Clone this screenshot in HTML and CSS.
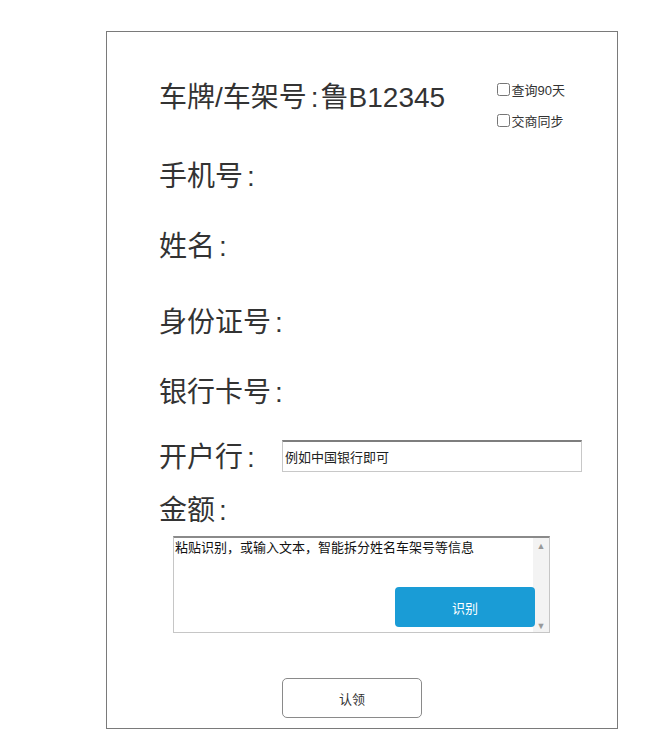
FILE: index.html
```html
<!DOCTYPE html>
<html lang="zh-CN">
<head>
<meta charset="utf-8">
<title>认领</title>
<link rel="stylesheet" href="styles.css">
</head>
<body>
<div class="panel">
  <div class="row row-plate">
    <div class="label">车牌/车架号<span class="colon">:</span>鲁B12345</div>
    <div class="checks">
      <label class="check"><input type="checkbox"><span>查询90天</span></label>
      <label class="check"><input type="checkbox"><span>交商同步</span></label>
    </div>
  </div>
  <div class="row row-phone"><div class="label">手机号<span class="colon">:</span></div></div>
  <div class="row row-name"><div class="label">姓名<span class="colon">:</span></div></div>
  <div class="row row-id"><div class="label">身份证号<span class="colon">:</span></div></div>
  <div class="row row-card"><div class="label">银行卡号<span class="colon">:</span></div></div>
  <div class="row row-bank">
    <div class="label label-bank">开户行<span class="colon">:</span></div>
    <input class="bank-input" type="text" value="例如中国银行即可">
  </div>
  <div class="row row-amount"><div class="label">金额<span class="colon">:</span></div></div>
  <div class="paste">
    <textarea class="paste-text">粘贴识别，或输入文本，智能拆分姓名车架号等信息</textarea>
    <div class="scrollbar"><span class="arrow">&#9650;</span><span class="arrow">&#9660;</span></div>
    <button class="btn-parse" type="button">识别</button>
  </div>
  <button class="btn-claim" type="button">认领</button>
</div>
</body>
</html>
```

FILE: styles.css
```css
* { box-sizing: border-box; }
html, body { margin: 0; padding: 0; background: #fff; }
body {
  font-family: "Liberation Sans", "Noto Sans CJK SC", sans-serif;
  color: #333;
}
.panel {
  margin: 31px 0 0 106px;
  width: 512px;
  height: 698px;
  border: 1px solid #7a7a7a;
  padding: 46px 52px 0 52px;
  display: flex;
  flex-direction: column;
}
.row {
  display: flex;
  align-items: center;
  height: 40px;
}
.label {
  font-size: 28px;
  line-height: 40px;
  color: #333;
  white-space: nowrap;
  flex-shrink: 0;
}
.colon { margin: 0 2px 0 4px; }
.row-plate { justify-content: space-between; align-items: flex-start; }
.row-phone { margin-top: 39px; }
.row-name { margin-top: 30px; }
.row-id { margin-top: 36px; }
.row-card { margin-top: 30px; }
.row-bank { margin-top: 25px; }
.row-amount { margin-top: 13px; }

.checks {
  display: flex;
  flex-direction: column;
  gap: 11px;
  padding-top: 1px;
}
.check {
  display: flex;
  align-items: center;
  height: 20px;
  font-size: 13px;
  color: #333;
}
.check input {
  margin: 0 2px 0 0;
  width: 13px;
  height: 13px;
}

.label-bank { width: 123px; }
.bank-input {
  flex-shrink: 0;
  width: 300px;
  height: 32px;
  margin-top: -4px;
  border: 1px solid #c8c8c8;
  border-top: 2px solid #7e7e7e;
  padding: 0 2px;
  font-family: "Noto Sans CJK SC", sans-serif;
  font-size: 13px;
  color: #222;
  background: #fff;
  outline: none;
}

.paste {
  position: relative;
  margin: 5px 0 0 14px;
  width: 377px;
  height: 97px;
  border: 1px solid #c6c6c6;
  border-top: 2px solid #8a8a8a;
  display: flex;
}
.paste-text {
  flex: 1;
  height: 100%;
  border: none;
  resize: none;
  outline: none;
  padding: 0 1px;
  margin: 0;
  font-family: "Noto Sans CJK SC", sans-serif;
  font-size: 13px;
  line-height: 17px;
  color: #111;
  overflow: hidden;
  background: #fff;
}
.scrollbar {
  width: 16px;
  background: #f3f3f3;
  display: flex;
  flex-direction: column;
  justify-content: space-between;
  align-items: center;
  padding: 3px 0 1px;
}
.arrow {
  font-size: 9px;
  line-height: 10px;
  color: #999;
}
.btn-parse {
  position: absolute;
  left: 221px;
  top: 49px;
  width: 140px;
  height: 40px;
  border: none;
  border-radius: 4px;
  background: #1a9cd6;
  color: #fff;
  font-family: "Noto Sans CJK SC", sans-serif;
  font-size: 13px;
  cursor: pointer;
}
.btn-claim {
  margin: 45px 0 0 123px;
  width: 140px;
  height: 40px;
  border: 1px solid #8a8a8a;
  border-radius: 5px;
  background: #fff;
  color: #333;
  font-family: "Noto Sans CJK SC", sans-serif;
  font-size: 13px;
  cursor: pointer;
}
```
